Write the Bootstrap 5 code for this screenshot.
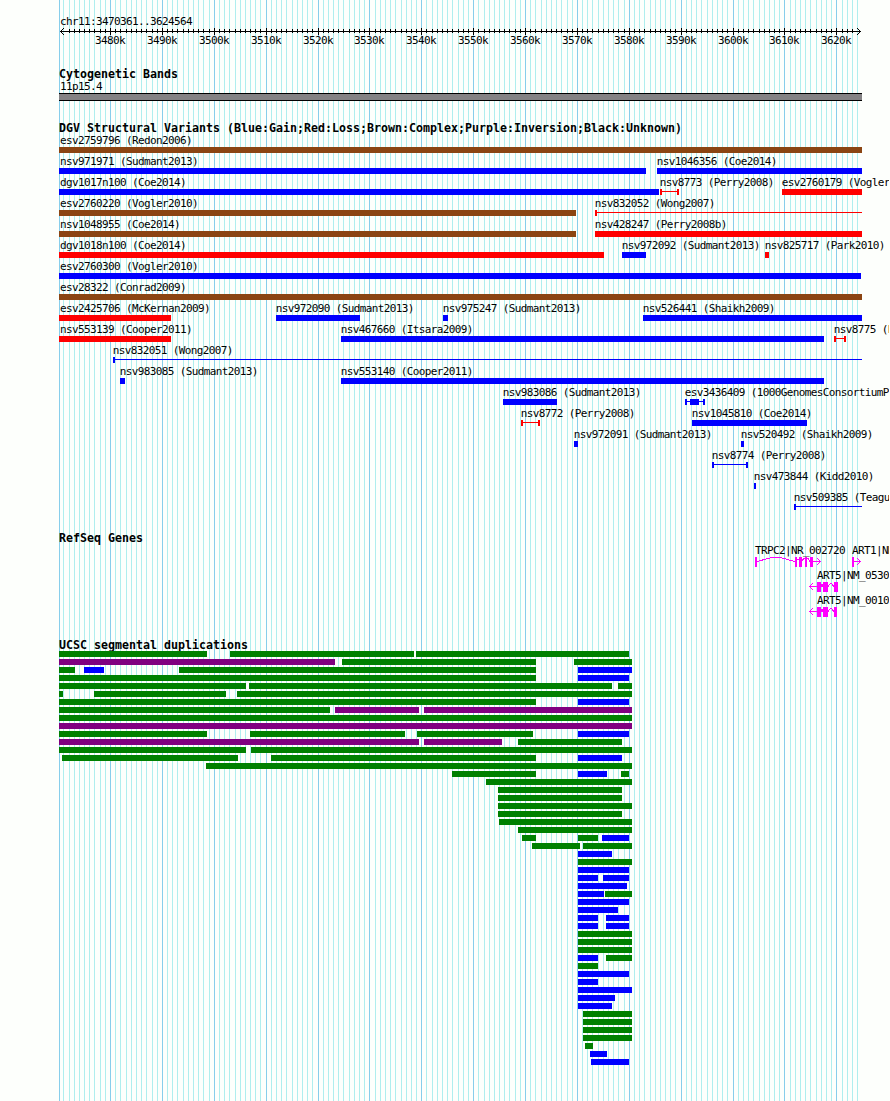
<!DOCTYPE html>
<html lang="en">
<head>
<meta charset="utf-8">
<title>chr11:3470361..3624564</title>
<link rel="stylesheet" href="https://cdn.jsdelivr.net/npm/bootstrap@5.3.0/dist/css/bootstrap.min.css">
<style>
body{background:#fdfffc;color:#000;font-family:"DejaVu Sans Mono","Liberation Mono",monospace;font-size:11px;letter-spacing:-.622px;line-height:12px}
.browser{width:889px;height:1101px}
.browser svg{display:block;shape-rendering:crispEdges}
.track-title{font-size:11.63px;font-weight:700;letter-spacing:0;line-height:12px;height:12px;margin:0 0 0 59px;white-space:pre}
.region{padding:16px 0 0 60px;height:27px}
.scale{height:41px}
.scale-label{top:8px}
.cyto{height:54px}
.band-name{padding:1px 0 0 60px;height:13px}
.band{margin-left:59px;width:803px;height:8px;background:#848284;border-top:1px solid #000;border-bottom:1px solid #000}
.dgv{height:410px}
.dgv .track-title{height:13px}
.feature-row{height:21px}
.feature-bar{top:12px;height:6px}
.feature-line{top:14px;height:1px}
.genes{height:107px}
.gene-row{height:25px}
.gene-row span{top:1px}
.gene-row svg{top:11px;left:740px}
.dup-row{height:8px}
.dup-row .feature-bar{top:0}
.blue{background:#00f}.red{background:#f00}.brown{background:#8b4513}.green{background:#008000}.purple{background:#800080}
</style>
</head>
<body>
<main class="browser position-relative overflow-hidden">
  <svg id="grid" class="position-absolute top-0 start-0" width="889" height="1101"></svg>
  <div class="position-relative d-flex flex-column">
    <header class="region text-nowrap">chr11:3470361..3624564</header>
    <section class="scale position-relative" id="scale">
      <svg id="axis" class="position-absolute top-0 start-0" width="889" height="10"></svg>
    </section>
    <section class="cyto">
      <h2 class="track-title">Cytogenetic Bands</h2>
      <div class="band-name">11p15.4</div>
      <div class="band"></div>
    </section>
    <section class="dgv">
      <h2 class="track-title">DGV Structural Variants (Blue:Gain;Red:Loss;Brown:Complex;Purple:Inversion;Black:Unknown)</h2>
      <div id="variants"></div>
    </section>
    <section class="genes">
      <h2 class="track-title">RefSeq Genes</h2>
      <div id="genes"></div>
    </section>
    <section>
      <h2 class="track-title">UCSC segmental duplications</h2>
      <div id="dups"></div>
    </section>
  </div>
</main>
<script src="https://cdn.jsdelivr.net/npm/bootstrap@5.3.0/dist/js/bootstrap.bundle.min.js"></script>
<script>
const toX = bp => Math.round(60 + (bp - 3470361) * 800 / 154203);
const colors = {b:'blue', r:'red', n:'brown', g:'green', p:'purple'};
const byId = id => document.getElementById(id);

// Grid lines and ruler
let grid = '<rect x="59" y="0" width="1" height="1101" fill="#87ceeb"/>';
let axis = '<rect x="60" y="4" width="801" height="1" fill="#000"/>' +
  '<path d="M60 4h1v1h-1zM61 3h1v1h-1zM62 2h1v1h-1zM63 1h1v1h-1zM61 5h1v1h-1zM62 6h1v1h-1zM63 7h1v1h-1zM859 3h1v1h-1zM858 2h1v1h-1zM857 1h1v1h-1zM859 5h1v1h-1zM858 6h1v1h-1zM857 7h1v1h-1z"/>';
let labels = '';
for (let k = 3471; k <= 3624; k++) {
  const x = toX(k * 1000), major = k % 10 === 0;
  grid += `<rect x="${x}" y="0" width="1" height="1101" fill="${major ? '#87ceeb' : '#afeeee'}"/>`;
  if (k > 3471 && k < 3624) axis += `<rect x="${x}" y="${major ? 1 : 2}" width="1" height="${major ? 7 : 4}" fill="#000"/>`;
  if (major) labels += `<span class="scale-label position-absolute" style="left:${x - 15}px">${k}k</span>`;
}
byId('grid').innerHTML = grid;
byId('axis').innerHTML = axis;
byId('scale').insertAdjacentHTML('beforeend', labels);

const bar = (a, z, c) => `<i class="feature-bar position-absolute ${colors[c]}" style="left:${a}px;width:${z - a}px"></i>`;
const line = (a, z, c) => `<i class="feature-line position-absolute ${colors[c]}" style="left:${a}px;width:${z - a}px"></i>`;

// Variants: name, start, end, colour, shape ("cap" = both ends, "open" = runs off the right side)
const variants = [
 [['esv2759796 (Redon2006)',59,862,'n']],
 [['nsv971971 (Sudmant2013)',59,646,'b'],['nsv1046356 (Coe2014)',657,862,'b']],
 [['dgv1017n100 (Coe2014)',59,659,'b'],['nsv8773 (Perry2008)',660,679,'r','cap'],['esv2760179 (Vogler',782,862,'r']],
 [['esv2760220 (Vogler2010)',59,576,'n'],['nsv832052 (Wong2007)',595,862,'r','open']],
 [['nsv1048955 (Coe2014)',59,576,'n'],['nsv428247 (Perry2008b)',595,862,'r']],
 [['dgv1018n100 (Coe2014)',59,604,'r'],['nsv972092 (Sudmant2013)',622,646,'b'],['nsv825717 (Park2010)',765,769,'r']],
 [['esv2760300 (Vogler2010)',59,861,'b']],
 [['esv28322 (Conrad2009)',59,862,'n']],
 [['esv2425706 (McKernan2009)',59,171,'r'],['nsv972090 (Sudmant2013)',276,360,'b'],['nsv975247 (Sudmant2013)',443,448,'b'],['nsv526441 (Shaikh2009)',643,862,'b']],
 [['nsv553139 (Cooper2011)',59,171,'r'],['nsv467660 (Itsara2009)',341,824,'b'],['nsv8775 (P',834,846,'r','cap']],
 [['nsv832051 (Wong2007)',113,862,'b','open']],
 [['nsv983085 (Sudmant2013)',120,125,'b'],['nsv553140 (Cooper2011)',341,824,'b']],
 [['nsv983086 (Sudmant2013)',503,557,'b'],['esv3436409 (1000GenomesConsortiumP',685,705,'b','core']],
 [['nsv8772 (Perry2008)',521,540,'r','cap'],['nsv1045810 (Coe2014)',692,807,'b']],
 [['nsv972091 (Sudmant2013)',574,578,'b'],['nsv520492 (Shaikh2009)',741,744,'b']],
 [['nsv8774 (Perry2008)',712,748,'b','cap']],
 [['nsv473844 (Kidd2010)',754,756,'b']],
 [['nsv509385 (Teagu',794,862,'b','open']]
];
byId('variants').innerHTML = variants.map(row => '<div class="feature-row position-relative text-nowrap">' + row.map(([t, a, z, c, s]) => {
  let out = `<span class="position-absolute" style="left:${a === 59 ? 60 : a - .3}px">${t}</span>`;
  if (!s) return out + bar(a, z, c);
  out += line(a, z, c) + bar(a, a + 2, c);
  if (s !== 'open') out += bar(z - 2, z, c);
  if (s === 'core') out += bar(690, 699, c);
  return out;
}).join('') + '</div>').join('');

// Genes: labels, exons, introns and arrows (drawing origin is x = 740)
const art5 = last => `<path d="M83 2h5v10h-5zM77 2h4v10h-4zM94 2h${last}v10h-${last}z" fill="#f0f"/><path d="M77 6.5h-8M73 3l-3.5 3.5 3.5 3.5M81 6.5l1-2 1 2M88 6.5l3-3.5 3 3.5" fill="none" stroke="#f0f"/>`;
const genes = [
 [[['TRPC2|NR_002720',755],['ART1|NM',852]],
  '<path d="M15 2h2v10h-2zM55 2h2v10h-2zM59 2h3v10h-3zM65 2h2v10h-2zM70 2h3v10h-3zM112 2h2v10h-2z" fill="#f0f"/><path d="M17 6.5l13-3.5 6-.5 6 .5 13 3.5M57 5l1-1 1 1M62 6l2-3 1 1M67 4l1-1 2 4M73 6.5h8M77 3l3.5 3.5-3.5 3.5M114 6.5h7M117 3l3.5 3.5-3.5 3.5" fill="none" stroke="#f0f"/>'],
 [[['ART5|NM_05301',817]], art5(4)],
 [[['ART5|NM_00107',817]], art5(3)]
];
byId('genes').innerHTML = genes.map(([names, art]) => '<div class="gene-row position-relative text-nowrap">' +
  names.map(([t, x]) => `<span class="position-absolute" style="left:${x}px">${t}</span>`).join('') +
  `<svg class="position-absolute" width="130" height="13">${art}</svg></div>`).join('');

// Segmental duplications, one string per row
const dups = `g59-207 g230-414 g416-629
p59-335 g342-536 g574-632
g59-75 b84-104 g179-536 b578-632
g59-536 b578-629
g59-246 g249-612 g618-632
g59-63 g94-226 g237-632
g59-536 b578-629
g59-330 p335-419 p424-632
g59-632
p59-632
g59-207 g250-405 g417-533 b578-629
p59-419 p424-502 g518-622
g59-246 g251-632
g62-238 g271-536 b578-622
g206-632
g452-536 b578-607 g621-629
g486-632
g498-622
g498-622
g498-632
g498-622
g499-632
g518-632
g522-536 g578-598 b602-629
g532-580 g583-632
b578-612
g578-632
b578-629
b578-598 b603-629
b578-627
b578-604 g605-632
b578-629
b578-618
b578-598 b606-629
b578-598 b606-629
g578-632
g578-632
g578-632
b578-598 g606-632
g578-598
b578-629
b578-598
b578-632
b578-615
b578-612
g583-632
g583-632
g583-632
g583-632
g585-593
b590-607
b591-629`.split('\n');
byId('dups').innerHTML = dups.map(row => '<div class="dup-row position-relative">' + row.split(' ').map(s => {
  const [a, z] = s.slice(1).split('-').map(Number);
  return bar(a, z, s[0]);
}).join('') + '</div>').join('');
</script>
</body>
</html>
